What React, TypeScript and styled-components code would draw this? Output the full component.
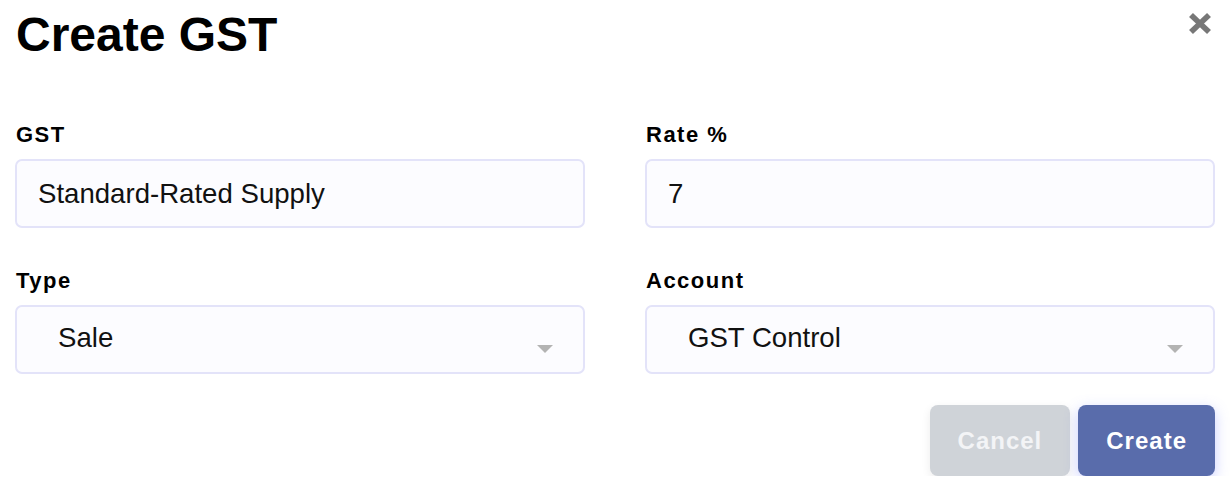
import React from "react";
import styled, { createGlobalStyle } from "styled-components";

const GlobalStyle = createGlobalStyle`
  html, body {
    margin: 0;
    padding: 0;
    background: #ffffff;
  }
  body {
    font-family: "Liberation Sans", Arial, Helvetica, sans-serif;
    color: #000;
  }
`;

const Dialog = styled.div`
  width: 1200px;
  padding: 0 16px 0 15px;
  box-sizing: content-box;
`;

const Header = styled.div`
  display: flex;
  justify-content: space-between;
  align-items: flex-start;
  height: 124px;
`;

const Title = styled.h1`
  margin: 11px 0 0 1px;
  font-size: 48px;
  line-height: 48px;
  font-weight: 700;
  color: #000;
`;

const CloseButton = styled.button`
  margin: 12px 2px 0 0;
  padding: 0;
  border: none;
  background: transparent;
  width: 26px;
  height: 23px;
  display: flex;
  cursor: pointer;
`;

const FieldGrid = styled.div`
  display: grid;
  grid-template-columns: 1fr 1fr;
  column-gap: 60px;
  row-gap: 42px;
`;

const Field = styled.div`
  display: flex;
  flex-direction: column;
  gap: 13px;
`;

const Label = styled.label`
  font-size: 22px;
  line-height: 22px;
  font-weight: 700;
  letter-spacing: 1.5px;
  padding-left: 1px;
  color: #000;
`;

const Box = styled.div<{ $select?: boolean }>`
  position: relative;
  height: 69px;
  box-sizing: border-box;
  border: 2px solid #e3e3f9;
  border-radius: 7px;
  background: #fcfcff;
  display: flex;
  align-items: center;
  padding: ${(p) => (p.$select ? "0 60px 3px 41px" : "0 20px 0 21px")};
  font-size: 27.6px;
  color: #111;
`;

const Arrow = styled.span`
  position: absolute;
  right: 30px;
  top: 38px;
  width: 0;
  height: 0;
  border-left: 8px solid transparent;
  border-right: 8px solid transparent;
  border-top: 8px solid #b3b3b3;
`;

const Actions = styled.div`
  display: flex;
  justify-content: flex-end;
  gap: 8px;
  margin-top: 31px;
`;

const Button = styled.button<{ $primary?: boolean }>`
  height: 71px;
  padding: 0 28px;
  border: none;
  border-radius: 8px;
  font-family: "Liberation Sans", Arial, sans-serif;
  font-size: 24px;
  font-weight: 700;
  letter-spacing: 1px;
  color: ${(p) => (p.$primary ? "#ffffff" : "#f3f4f6")};
  background: ${(p) => (p.$primary ? "#596cab" : "#cfd3d8")};
  box-shadow: ${(p) =>
    p.$primary
      ? "0 4px 14px rgba(110, 120, 255, 0.35)"
      : "0 3px 10px rgba(0, 0, 0, 0.08)"};
  cursor: pointer;
`;

const CloseIcon = () => (
  <svg width="26" height="23" viewBox="0 0 26 23">
    <g stroke="#777777" strokeWidth="5.6" strokeLinecap="butt">
      <line x1="4" y1="3" x2="22" y2="20" />
      <line x1="22" y1="3" x2="4" y2="20" />
    </g>
  </svg>
);

export default function App() {
  return (
    <>
      <GlobalStyle />
      <Dialog>
        <Header>
          <Title>Create GST</Title>
          <CloseButton aria-label="Close">
            <CloseIcon />
          </CloseButton>
        </Header>
        <FieldGrid>
          <Field>
            <Label>GST</Label>
            <Box>Standard-Rated Supply</Box>
          </Field>
          <Field>
            <Label>Rate %</Label>
            <Box>7</Box>
          </Field>
          <Field>
            <Label>Type</Label>
            <Box $select>
              Sale
              <Arrow />
            </Box>
          </Field>
          <Field>
            <Label>Account</Label>
            <Box $select>
              GST Control
              <Arrow />
            </Box>
          </Field>
        </FieldGrid>
        <Actions>
          <Button>Cancel</Button>
          <Button $primary>Create</Button>
        </Actions>
      </Dialog>
    </>
  );
}
